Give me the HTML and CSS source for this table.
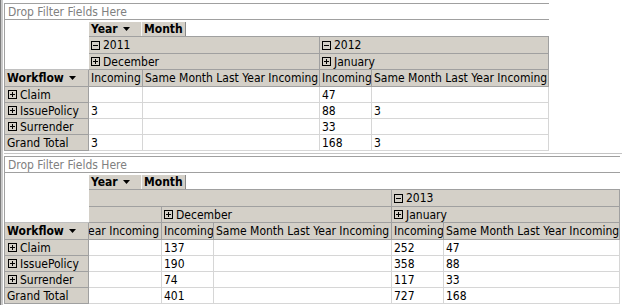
FILE: index.html
```html
<!DOCTYPE html>
<html>
<head>
<meta charset="utf-8">
<link rel="stylesheet" href="styles.css">
</head>
<body>
<div class="screen">
  <section class="pivot pivot-top">
    <div class="cell filter">Drop Filter Fields Here</div>
    <div class="cell corner"></div>
    <div class="cell fields span4">
      <span class="field field-year">Year <svg class="tri" width="7" height="4" viewBox="0 0 7 4"><path d="M0 0h7L3.5 4z"/></svg></span>
      <span class="field field-month">Month</span>
    </div>
    <div class="cell band span2"><svg class="tg" width="9" height="9" viewBox="0 0 9 9"><rect x=".5" y=".5" width="8" height="8" fill="none" stroke="#000"/><path d="M2 4.5h5" stroke="#000"/></svg>2011</div>
    <div class="cell band span2"><svg class="tg" width="9" height="9" viewBox="0 0 9 9"><rect x=".5" y=".5" width="8" height="8" fill="none" stroke="#000"/><path d="M2 4.5h5" stroke="#000"/></svg>2012</div>
    <div class="cell band span2"><svg class="tg" width="9" height="9" viewBox="0 0 9 9"><rect x=".5" y=".5" width="8" height="8" fill="none" stroke="#000"/><path d="M2 4.5h5M4.5 2v5" stroke="#000"/></svg>December</div>
    <div class="cell band span2"><svg class="tg" width="9" height="9" viewBox="0 0 9 9"><rect x=".5" y=".5" width="8" height="8" fill="none" stroke="#000"/><path d="M2 4.5h5M4.5 2v5" stroke="#000"/></svg>January</div>

    <div class="cell hdr bold">Workflow <svg class="tri" width="7" height="4" viewBox="0 0 7 4"><path d="M0 0h7L3.5 4z"/></svg></div>
    <div class="cell hdr">Incoming</div>
    <div class="cell hdr">Same Month Last Year Incoming</div>
    <div class="cell hdr">Incoming</div>
    <div class="cell hdr">Same Month Last Year Incoming</div>

    <div class="cell rowhdr"><svg class="tg" width="9" height="9" viewBox="0 0 9 9"><rect x=".5" y=".5" width="8" height="8" fill="none" stroke="#000"/><path d="M2 4.5h5M4.5 2v5" stroke="#000"/></svg>Claim</div>
    <div class="cell data"></div><div class="cell data"></div><div class="cell data">47</div><div class="cell data"></div>

    <div class="cell rowhdr"><svg class="tg" width="9" height="9" viewBox="0 0 9 9"><rect x=".5" y=".5" width="8" height="8" fill="none" stroke="#000"/><path d="M2 4.5h5M4.5 2v5" stroke="#000"/></svg>IssuePolicy</div>
    <div class="cell data">3</div><div class="cell data"></div><div class="cell data">88</div><div class="cell data">3</div>

    <div class="cell rowhdr"><svg class="tg" width="9" height="9" viewBox="0 0 9 9"><rect x=".5" y=".5" width="8" height="8" fill="none" stroke="#000"/><path d="M2 4.5h5M4.5 2v5" stroke="#000"/></svg>Surrender</div>
    <div class="cell data"></div><div class="cell data"></div><div class="cell data">33</div><div class="cell data"></div>

    <div class="cell rowhdr">Grand Total</div>
    <div class="cell data">3</div><div class="cell data"></div><div class="cell data">168</div><div class="cell data">3</div>
  </section>

  <div class="split"></div>

  <section class="pivot pivot-bottom">
    <div class="cell filter">Drop Filter Fields Here</div>
    <div class="cell corner"></div>
    <div class="cell fields span5">
      <span class="field field-year">Year <svg class="tri" width="7" height="4" viewBox="0 0 7 4"><path d="M0 0h7L3.5 4z"/></svg></span>
      <span class="field field-month">Month</span>
    </div>
    <div class="cell band span3"></div>
    <div class="cell band span2"><svg class="tg" width="9" height="9" viewBox="0 0 9 9"><rect x=".5" y=".5" width="8" height="8" fill="none" stroke="#000"/><path d="M2 4.5h5" stroke="#000"/></svg>2013</div>
    <div class="cell band"></div>
    <div class="cell band span2"><svg class="tg" width="9" height="9" viewBox="0 0 9 9"><rect x=".5" y=".5" width="8" height="8" fill="none" stroke="#000"/><path d="M2 4.5h5M4.5 2v5" stroke="#000"/></svg>December</div>
    <div class="cell band span2"><svg class="tg" width="9" height="9" viewBox="0 0 9 9"><rect x=".5" y=".5" width="8" height="8" fill="none" stroke="#000"/><path d="M2 4.5h5M4.5 2v5" stroke="#000"/></svg>January</div>

    <div class="cell hdr bold">Workflow <svg class="tri" width="7" height="4" viewBox="0 0 7 4"><path d="M0 0h7L3.5 4z"/></svg></div>
    <div class="cell hdr clip-left">ear Incoming</div>
    <div class="cell hdr">Incoming</div>
    <div class="cell hdr">Same Month Last Year Incoming</div>
    <div class="cell hdr">Incoming</div>
    <div class="cell hdr">Same Month Last Year Incoming</div>

    <div class="cell rowhdr"><svg class="tg" width="9" height="9" viewBox="0 0 9 9"><rect x=".5" y=".5" width="8" height="8" fill="none" stroke="#000"/><path d="M2 4.5h5M4.5 2v5" stroke="#000"/></svg>Claim</div>
    <div class="cell data"></div><div class="cell data">137</div><div class="cell data"></div><div class="cell data">252</div><div class="cell data">47</div>

    <div class="cell rowhdr"><svg class="tg" width="9" height="9" viewBox="0 0 9 9"><rect x=".5" y=".5" width="8" height="8" fill="none" stroke="#000"/><path d="M2 4.5h5M4.5 2v5" stroke="#000"/></svg>IssuePolicy</div>
    <div class="cell data"></div><div class="cell data">190</div><div class="cell data"></div><div class="cell data">358</div><div class="cell data">88</div>

    <div class="cell rowhdr"><svg class="tg" width="9" height="9" viewBox="0 0 9 9"><rect x=".5" y=".5" width="8" height="8" fill="none" stroke="#000"/><path d="M2 4.5h5M4.5 2v5" stroke="#000"/></svg>Surrender</div>
    <div class="cell data"></div><div class="cell data">74</div><div class="cell data"></div><div class="cell data">117</div><div class="cell data">33</div>

    <div class="cell rowhdr">Grand Total</div>
    <div class="cell data"></div><div class="cell data">401</div><div class="cell data"></div><div class="cell data">727</div><div class="cell data">168</div>
  </section>
</div>
</body>
</html>
```

FILE: styles.css
```css
* { box-sizing: border-box; }
html, body { margin: 0; padding: 0; }
body {
  width: 622px;
  height: 305px;
  overflow: hidden;
  background: #fff;
  font-family: "DejaVu Sans Condensed", "DejaVu Sans", sans-serif;
  font-stretch: condensed;
  font-size: 12px;
  color: #000;
}
.screen {
  height: 305px;
  border-left: 1px solid #7c7c7c;
  box-shadow: inset 2px 0 0 #c8c8c8;
  padding-left: 3px;
  padding-top: 3px;
}
.pivot {
  display: grid;
  width: max-content;
  border-left: 1px solid #a0a0a0;
  border-top: 1px solid #a0a0a0;
}
.pivot-top {
  grid-template-columns: 84px 54px 177px 52px 177px;
  grid-template-rows: 16px 17px 17px 16px 17px repeat(4, 16px);
}
.pivot-bottom {
  grid-template-columns: 84px 73px 52px 178px 52px 176px;
  grid-template-rows: 16px 17px 17px 16px 17px repeat(4, 16px);
}
.split {
  height: 5px;
  background: linear-gradient(#fff 0 2px, #c4c4c4 2px 3px, #fff 3px);
}
.cell {
  display: flex;
  align-items: center;
  white-space: nowrap;
  overflow: hidden;
  padding: 0 2px;
  border-right: 1px solid #a0a0a0;
  border-bottom: 1px solid #a0a0a0;
  line-height: 1;
}
.filter {
  grid-column: 1 / -1;
  color: #808080;
  border-right: none;
  padding-left: 3px;
}
.corner {
  grid-row: span 3;
  border-right: none;
  border-bottom-color: #c0c0c0;
}
.span2 { grid-column: span 2; }
.span3 { grid-column: span 3; }
.span4 { grid-column: span 4; }
.span5 { grid-column: span 5; }
.fields {
  border-right: none;
  align-items: flex-end;
  padding: 0;
}
.field {
  display: flex;
  align-items: center;
  height: 14px;
  background: #d4d0c8;
  font-weight: bold;
  padding-left: 2px;
}
.field-year {
  width: 53px;
  border-right: 1px solid #f4f4f4;
}
.field-month {
  width: 44px;
  border-right: 1px solid #8a8a8a;
}
.tri { margin-left: 5px; flex: none; }
.band, .hdr, .rowhdr { background: #d4d0c8; }
.bold { font-weight: bold; }
.tg { flex: none; margin-right: 3px; }
.rowhdr .tg { margin-left: 1px; }
.data {
  border-right-color: #d6d6d6;
  border-bottom-color: #d6d6d6;
}
.clip-left { justify-content: flex-end; }
```
